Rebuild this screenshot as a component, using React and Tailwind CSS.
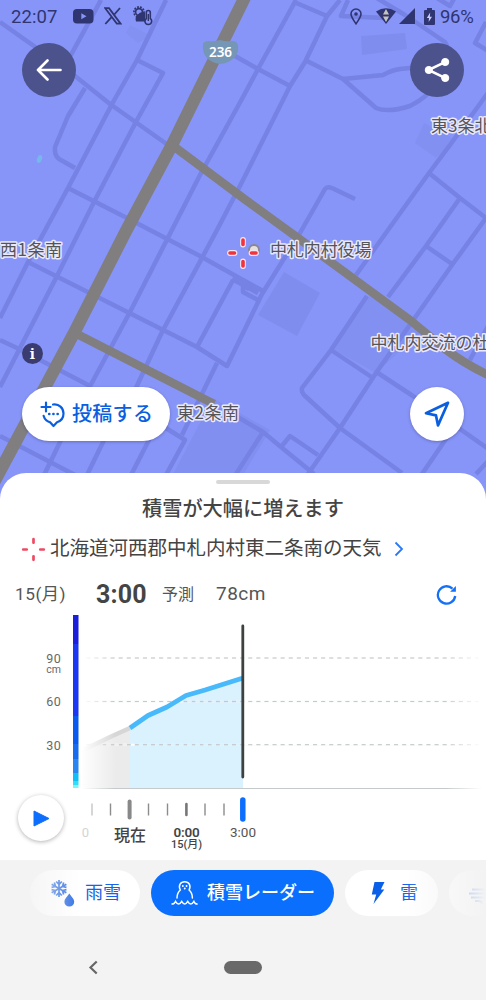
import React from 'react';

const MINOR_ROADS = [
    'M0 22L65 68L110 104L168 145',
    'M101 0L66 64',
    'M166 0L137 60L112 104L68 188L28 262L0 318',
    'M137 60L163 73L137 120L95 200L57 276L0 387',
    'M85 88L68 116L55 147Q54 155 59 159L75 168',
    'M68 188L125 217L200 256L243 280L265 292',
    'M235 56L258 69L290 86',
    'M296 0L258 69L243 97L200 175L130 312L88 390',
    'M294 2L327 16',
    'M340 0L327 16L305 62L290 86L243 180L217 230L162 332L135 390',
    'M348 0L341 16L385 18',
    'M375 -3L405 15L445 42Q450 48 443 62L434 85Q428 97 410 106Q388 113 376 108L343 79L305 60',
    'M343 79L383 75Q392 70 400 69L440 65',
    'M437 -2L450 6L455 -3',
    'M486 22L475 43L490 52',
    'M490 90L450 145L429 173L388 230L356 275',
    'M367 296L331 350L302 388Q301 391 304 395L340 428L402 473',
    'M429 173L460 198L486 218L452 265L376 373L340 428L308 474',
    'M460 198L426 246L388 297',
    'M426 246L452 264',
    'M331 350L373 378',
    'M378 373L413 396L490 450',
    'M448 436L422 474',
    'M488 326L470 360',
    'M490 459L476 474',
    'M355 199L332 188Q327 186 325 189L300 233L262 294L227 366L197 347L28 262',
    'M233 280L197 347',
    'M232 279L258 293M243 286L243 292L258 300M250 283L246 290',
    'M217 363L182 435',
    'M0 340L17 348L90 386',
    'M0 436L75 475',
    'M62 438L44 475',
    'M105 438L87 475',
    'M150 438L131 475',
    'M158 423L185 440L166 475',
    'M236 416L263 432L281 447L314 474',
    'M281 447L290 436L318 455',
    'M263 432L236 474',
];

const SCALE = [
    { y: 5, h: 29, c: '#1b1fdc' },
    { y: 34, h: 72, c: '#1c37f3' },
    { y: 106, h: 28, c: '#0a5af0' },
    { y: 134, h: 15, c: '#176bee' },
    { y: 149, h: 14, c: '#2985f2' },
    { y: 163, h: 8, c: '#10bef8' },
    { y: 171, h: 4, c: '#31def8' },
    { y: 175, h: 3, c: '#7df4fc' },
];

const TICKS = [92, 110.5, 148.5, 167.5, 205, 224];

const font = "font-[Roboto,'Noto_Sans_CJK_JP',sans-serif]";

const Crosshair = ({ halo, className }) => (
    <svg viewBox="0 0 34 34" className={className} fill="none" strokeLinecap="round">
        {halo && <path d="M17 4v4.500M17 25.500v4.500M4 17h4.500M25.500 17h4.500" stroke="#f3e6f4" strokeWidth="5.800" />}
        <path d="M17 4v4.500M17 25.500v4.500M4 17h4.500M25.500 17h4.500" stroke={halo ? '#f0333c' : '#ee4a62'} strokeWidth={halo ? 3.6 : 3.4} />
    </svg>
);

const MapLabel = ({ x, y, size = 17, children, ...rest }) => (
    <text x={x} y={y} fontSize={size} fill="#555457" stroke="#e9e8fc" strokeWidth="3" strokeLinejoin="round" paintOrder="stroke" {...rest}>{children}</text>
);

const MapView = () => (
    <svg viewBox="0 0 486 500" className="block w-[486px] h-[500px] bg-[#8795f8]">
        <g fill="#7f8eee">
            <path d="M361 36L405 33L407 49L362 55Z" />
            <path d="M284 272L320 293L297 336L258 315Z" />
            <path d="M370 296L400 311L422 331L376 373L333 349Z" opacity="0.7" />
            <path d="M424 123L456 140L436 158L415 143Z" opacity="0.6" />
            <path d="M213 398L270 430L240 480L170 480Z" opacity="0.8" />
            <path d="M130 25L150 35L138 43L126 33Z" opacity="0.5" />
        </g>
        <ellipse cx="39.500" cy="159" rx="2.400" ry="4" transform="rotate(20 39.500 159)" fill="#76b8ec" />
        <g fill="none" stroke="#7682e4" strokeWidth="4.5" strokeLinejoin="round">
            {MINOR_ROADS.map((d, i) => <path key={i} d={d} />)}
        </g>
        <g fill="none" stroke="#807e7f">
            <path d="M172 145L243 198L298 238L410 320L445 349Q465 364 490 376" strokeWidth="8.500" />
            <path d="M75 333L214 404" strokeWidth="8.500" />
            <path d="M246 -5L172 145L126 231L74 333L-8 486" strokeWidth="12.500" />
        </g>
        <path d="M203 44Q204 41 209 41Q214 42 220 40Q227 42 232 41Q237 41 238 45Q239 52 235 57Q228 64 220 64Q212 63 207 58Q202 53 203 44Z" fill="#7696b6" />
        <text x="220.5" y="57" textAnchor="middle" fontSize="13.500" fontWeight="600" fill="#fff" fontFamily="Noto Sans">236</text>
        <circle cx="254" cy="250" r="5" fill="#e6e1dd" stroke="#8a8792" strokeWidth="2" />
        <g fontFamily="'Noto Sans CJK JP', sans-serif">
            <MapLabel x={431} y={132}>東3条北</MapLabel>
            <MapLabel x={0} y={256} letterSpacing="0.500">西1条南</MapLabel>
            <MapLabel x={270} y={255.5} letterSpacing="-0.100">中札内村役場</MapLabel>
            <MapLabel x={370.5} y={348.5}>中札内交流の杜</MapLabel>
            <MapLabel x={177} y={418.5} letterSpacing="0.500">東2条南</MapLabel>
        </g>
    </svg>
);

const StatusBar = () => (
    <div className="absolute inset-x-0 top-0 h-8 flex items-center justify-between pl-[11px] pr-[10px] text-[#2f3570]">
        <div className="flex items-center">
            <span className="text-[18.500px] leading-8 tracking-[0.1px] w-[62px] pt-[2px]">22:07</span>
            <svg viewBox="0 0 21 16" className="w-[21px] h-[16px]">
                <rect x="0" y="1" width="20.5" height="14.5" rx="4" fill="currentColor" />
                <path d="M8.3 5.2v6l5.2-3z" fill="#8795f8" />
            </svg>
            <svg viewBox="0 0 18 18" className="w-[18px] h-[18px] ml-[10px]" fill="none" stroke="currentColor">
                <path d="M1.2 1.2h3.8l11.6 15.4h-3.8z" strokeWidth="1.8" />
                <path d="M16 1L10.3 7.5M7.6 10.2L1.3 17" strokeWidth="1.8" />
            </svg>
            <svg viewBox="0 0 20 20" className="w-[20px] h-[20px] ml-[11px]">
                <circle cx="6" cy="6" r="5" fill="none" stroke="currentColor" strokeWidth="1.8" strokeDasharray="1.8 1.2" />
                <circle cx="6" cy="6" r="3.4" fill="none" stroke="currentColor" strokeWidth="1.6" />
                <path d="M3 15.500q-1.500-5 2-7q2.500-3.500 7-1.500v8.500z" fill="currentColor" />
                <path d="M13.3 6.5q0-2 2-2t2 2v6q1.6 1 1.4 3q-.4 3-3.4 3t-3.4-3q0-2 1.4-3z" fill="#8795f8" stroke="currentColor" strokeWidth="1.600" />
                <path d="M15.3 8v7" stroke="currentColor" strokeWidth="1.4" />
            </svg>
        </div>
        <div className="flex items-center">
            <svg viewBox="0 0 12 17" className="w-[12px] h-[17px] mr-[14px]" fill="none" stroke="currentColor">
                <path d="M6 15.8C3 11.5 1 8.8 1 6a5 5 0 0 1 10 0c0 2.800-2 5.500-5 9.800z" strokeWidth="1.6" />
                <circle cx="6" cy="6" r="1.8" fill="currentColor" stroke="none" />
            </svg>
            <svg viewBox="0 0 20 16" className="w-[20px] h-[16px]">
                <path d="M0 3.500Q10-3 20 3.500L10 16z" fill="currentColor" />
                <path d="M10 1l3 5.500h-6zM10 14l3-5.500h-6z" fill="#c5c3bd" />
            </svg>
            <svg viewBox="0 0 16 16" className="w-[16px] h-[16px] ml-[3px]"><path d="M16 0v16H0z" fill="currentColor" /></svg>
            <svg viewBox="0 0 11 17" className="w-[11px] h-[17px] ml-[9px]">
                <path d="M3 0h5v2h2q1 0 1 1v13q0 1-1 1H1q-1 0-1-1V3q0-1 1-1h2z" fill="currentColor" />
                <path d="M6.200 4.500L2.800 10h2.200l-.4 4L8 8.700H5.800z" fill="#c9cdf8" />
            </svg>
            <span className="text-[18.500px] leading-8 ml-[5px] w-[36px] pt-[2px] whitespace-nowrap tracking-[-0.3px]">96%</span>
        </div>
    </div>
);

const MapControls = () => (
    <>
        <div className="absolute left-[22px] top-[43px] w-[54px] h-[54px] rounded-full bg-[#4c528b] flex items-center justify-center">
            <svg viewBox="0 0 26 22" className="w-[26px] h-[22px]" fill="none" stroke="#fff" strokeWidth="2.600" strokeLinecap="round" strokeLinejoin="round">
                <path d="M24.500 11H2M11.500 1.500L2 11l9.500 9.500" />
            </svg>
        </div>
        <div className="absolute right-[22px] top-[43px] w-[54px] h-[54px] rounded-full bg-[#4c528b] flex items-center justify-center">
            <svg viewBox="0 0 26 26" className="w-[26px] h-[26px]" fill="#fff" stroke="#fff">
                <path d="M21.500 4.800L4.500 13l17 8.200" fill="none" strokeWidth="2.600" />
                <circle cx="21.200" cy="5" r="3.600" />
                <circle cx="4.800" cy="13" r="3.600" />
                <circle cx="21.200" cy="21" r="3.600" />
            </svg>
        </div>
        <Crosshair halo className="absolute left-[226px] top-[236px] w-[34px] h-[34px]" />
        <div className="absolute left-[22px] top-[343px] w-[21px] h-[21px] rounded-full bg-[#3a3c70] text-white text-center text-[15px] leading-[21px] font-bold font-['Noto_Serif','DejaVu_Serif',serif]">i</div>
        <div className="absolute left-[22px] top-[387px] w-[148px] h-[54px] rounded-full bg-white shadow-[0_1px_3px_rgba(40,40,90,0.35)] flex items-center pl-[18px]">
            <svg viewBox="0 0 26 27" className="w-[26px] h-[27px]" fill="none" stroke="#0a5fe0" strokeWidth="2.200" strokeLinecap="round" strokeLinejoin="round">
                <path d="M6 1.500v9M1.500 6h9" />
                <path d="M13 3.500C19 2.500 23.500 7 23.500 12.500c0 4.500-2.500 7.500-6.500 8.800L13.500 25l-3.200-3.600C7 20.500 4.500 18 3.600 14.800" />
                <path d="M9.200 13h.1M13.400 13h.1M17.600 13h.1" strokeWidth="2.600" />
            </svg>
            <span className="ml-[6px] text-[20px] leading-[28px] tracking-[0.3px] font-medium text-[#0a5fe0] whitespace-nowrap">投稿する</span>
        </div>
        <div className="absolute right-[22px] top-[387px] w-[54px] h-[54px] rounded-full bg-white shadow-[0_1px_3px_rgba(40,40,90,0.35)] flex items-center justify-center">
            <svg viewBox="0 0 26 26" className="w-[26px] h-[26px]" fill="none" stroke="#0a5fe0" strokeWidth="2.700" strokeLinejoin="round">
                <path d="M24 1.800L2 12.200l10 2.200l2 10z" />
            </svg>
        </div>
    </>
);

const SnowChart = () => (
    <svg viewBox="0 0 486 180" className="block w-[486px] h-[180px]">
        <defs>
            <linearGradient id="past" gradientUnits="userSpaceOnUse" x1="80" x2="116" y1="0" y2="0">
                <stop offset="0" stopColor="#fff" />
                <stop offset="1" stopColor="#ebebeb" />
            </linearGradient>
            <linearGradient id="pastLine" gradientUnits="userSpaceOnUse" x1="82" x2="116" y1="0" y2="0">
                <stop offset="0" stopColor="#fff" />
                <stop offset="1" stopColor="#d6d6d6" />
            </linearGradient>
            <linearGradient id="grid" gradientUnits="userSpaceOnUse" x1="82" x2="486" y1="0" y2="0">
                <stop offset="0" stopColor="#c4cacb" stopOpacity="0" />
                <stop offset="0.08" stopColor="#c4cacb" />
                <stop offset="0.9" stopColor="#c4cacb" />
                <stop offset="0.99" stopColor="#c4cacb" stopOpacity="0" />
            </linearGradient>
        </defs>
        <path d="M82 141L110 127.500L130 118V178H82z" fill="url(#past)" />
        <path d="M130 118L148 106L167 97L186 86L243 68V178H130z" fill="#daf1fe" />
        {[48, 91.500, 134.700].map(y => (
            <rect key={y} x="86" y={y - 0.6} width="394" height="1.200" fill="url(#grid)" />
        ))}
        {/* gaps that turn each grid line into dashes */}
        {[48, 91.500, 134.700].map(y => (
            <g key={y} strokeWidth="2" strokeDasharray="4 4.100">
                <path d={`M90.300 ${y}H480`} stroke="#fff" />
                {y > 100 && <path d={`M90.300 ${y}H130`} stroke="#f0f0f0" />}
            </g>
        ))}
        <path d="M138.900 134.700H243" stroke="#daf1fe" strokeWidth="2" strokeDasharray="4 4.100" />
        <path d="M187.500 91.500H243" stroke="#daf1fe" strokeWidth="2" strokeDasharray="4 4.100" />
        <path d="M82 140.500L110 127L130 118" fill="none" stroke="url(#pastLine)" strokeWidth="4.500" />
        <path d="M130 118L148 105.500L167 97L186 85.500L205 80L243 68" fill="none" stroke="#48b9fb" strokeWidth="4.800" strokeLinejoin="round" />
        <rect x="82" y="178" width="402" height="1" fill="url(#grid)" />
        {SCALE.map(s => <rect key={s.y} x="73" y={s.y} width="5.500" height={s.h} fill={s.c} />)}
        <path d="M242.800 16V167" stroke="#3d4142" strokeWidth="2.800" strokeLinecap="round" />
        <g fontSize="12.500" fill="#686868" textAnchor="end" letterSpacing="0.300">
            <text x="61" y="52.800">90</text>
            <text x="61" y="62.500" fontSize="10.500" letterSpacing="0">cm</text>
            <text x="61" y="96.300">60</text>
            <text x="61" y="139.500">30</text>
        </g>
    </svg>
);

const Timeline = () => (
    <div className="flex h-[69px] pl-[18px] pt-[5px]">
        <div className="w-[46px] h-[46px] rounded-full bg-white shadow-[0_1px_4px_rgba(0,0,0,0.3)] flex items-center justify-center shrink-0">
            <svg viewBox="0 0 17 17" className="w-[17px] h-[17px] ml-[1px]"><path d="M1 1v15L16 8.500z" fill="#0d6efd" stroke="#0d6efd" strokeLinejoin="round" /></svg>
        </div>
        <svg viewBox="64 795 422 64" className="w-[422px] h-[64px]">
            <g strokeWidth="1.400" stroke="#8c8c8c">
                {TICKS.map(x => <path key={x} d={`M${x} 803.500V815.500`} opacity={x < 100 ? 0.5 : 1} />)}
            </g>
            <path d="M129.600 801.500V817.500" stroke="#888" strokeWidth="4" strokeLinecap="round" />
            <path d="M186.400 804V815" stroke="#777" strokeWidth="2.600" strokeLinecap="round" />
            <path d="M242.800 800V819" stroke="#0d6efd" strokeWidth="5.500" strokeLinecap="round" />
            <g textAnchor="middle" fill="#444">
                <text x="85.500" y="837" fontSize="13" fill="#d4d4d4">0</text>
                <text x="130" y="841" fontSize="16" fontWeight="500">現在</text>
                <text x="186.500" y="837" fontSize="13.500" fontWeight="600" letterSpacing="-0.2">0:00</text>
                <text x="186.500" y="847.500" fontSize="11" fontWeight="500">15(月)</text>
                <text x="243" y="837" fontSize="13.500" fill="#555">3:00</text>
            </g>
        </svg>
    </div>
);

const Sheet = () => (
    <div className="relative -mt-[27px] h-[387px] bg-white rounded-t-[26px] text-[#444]">
        <div className="flex justify-center pt-[7px]"><div className="w-[54px] h-1 rounded-full bg-[#d8d8d8]" /></div>
        <div className="mt-[10px] h-[30px] leading-[30px] text-center text-[20.200px] font-medium">積雪が大幅に増えます</div>
        <div className="mt-[9px] h-[32px] flex items-center pl-[20px]">
            <Crosshair className="w-[27px] h-[27px]" />
            <span className="ml-[3px] text-[19.500px] leading-[32px] whitespace-nowrap">北海道河西郡中札内村東二条南の天気</span>
            <svg viewBox="0 0 10 16" className="w-[10px] h-[16px] ml-[12px]" fill="none" stroke="#2b78f5" strokeWidth="1.800"><path d="M1.500 1.500L8 8l-6.500 6.500" /></svg>
        </div>
        <div className="mt-[12px] h-[33px] pt-[2px] flex items-center">
            <span className="w-[96px] shrink-0 pl-[15px] text-[17.300px] tracking-[0.500px] text-[#555] whitespace-nowrap">15(月)</span>
            <span className="w-[66px] shrink-0 text-[25px] font-bold tracking-[0.2px]">3:00</span>
            <span className="w-[54px] shrink-0 text-[16px] text-[#555]">予測</span>
            <span className="w-[220px] shrink-0 text-[19px] tracking-[0.5px] text-[#555]">78cm</span>
            <svg viewBox="0 0 22 22" className="w-[22px] h-[22px] shrink-0" fill="none" stroke="#1470f5" strokeWidth="2.300">
                <path d="M19.200 12A8.700 8.700 0 1 1 16.500 4.600" />
                <path d="M19.900 2v5.800h-5.800z" fill="#1470f5" stroke="none" />
            </svg>
        </div>
        <SnowChart />
        <Timeline />
    </div>
);

const SnowRainIcon = () => (
    <svg viewBox="0 0 26 28" className="w-[26px] h-[28px]" fill="none" stroke="#2f6fe4" strokeWidth="1.700">
        {[0, 60, 120].map(a => (
            <path key={a} transform={`rotate(${a} 9 9.500)`} d="M9 1v17M6.200 2.500l2.800 3l2.800-3M6.200 16.500l2.800-3l2.800 3" />
        ))}
        <path d="M19.300 14.500c2.500 3.500 4.900 5.500 4.900 8.200a4.900 4.900 0 0 1-9.800 0c0-2.700 2.400-4.700 4.900-8.200z" fill="#2f6fe4" stroke="none" />
    </svg>
);

const SnowmanIcon = () => (
    <svg viewBox="0 0 27 26" className="w-[27px] h-[26px]" fill="none" stroke="#fff" strokeWidth="1.500" strokeLinecap="round">
        <path d="M6 18c0-3.500 1-6 3.300-8C7 5.500 9.500 1.800 13.700 1.800S20.400 5.500 18.100 10c2.300 2 3.300 4.500 3.300 8" />
        <path d="M11.800 6h.1M15.500 6h.1M13.700 8.500h.1" strokeWidth="1.800" />
        <path d="M1 24q2.500 0 3.500-2.600q1.500 2.600 3.100 2.600t3.100-2.600q1.500 2.600 3 2.600t3-2.600q1.500 2.600 3.100 2.600t3.100-2.600q1 2.600 3.200 2.600" />
    </svg>
);

const LayerTabs = () => (
    <div className="relative h-[56px] pt-[10px] overflow-hidden text-[18px] text-[#1762e6]">
        <div className="flex gap-[11px] -ml-[82px] w-[700px] h-[46px]">
            <div className="w-[101px] rounded-full bg-white" />
            <div className="w-[110px] rounded-full bg-white flex items-center pl-[20px]">
                <SnowRainIcon />
                <span className="ml-[9px] leading-none">雨雪</span>
            </div>
            <div className="w-[183px] rounded-full bg-[#0b6ffe] text-white flex items-center pl-[20px]">
                <SnowmanIcon />
                <span className="ml-[9px] leading-none font-medium whitespace-nowrap">積雪レーダー</span>
            </div>
            <div className="w-[93px] rounded-full bg-white flex items-center pl-[26px]">
                <svg viewBox="0 0 14 24" className="w-[14px] h-[24px]"><path d="M3.500 1h10L9.800 8.500h3.500L2.500 23L5.200 13.500H.8z" fill="#0a5fe8" /></svg>
                <span className="ml-[15px] leading-none">雷</span>
            </div>
            <div className="w-[110px] rounded-full bg-white flex items-center pl-[19px]">
                <svg viewBox="0 0 26 20" className="w-[26px] h-[20px] mt-1" fill="none" stroke="#1762e6" strokeWidth="2">
                    <path d="M4 4.500h17q3 0 3-3M1 8.500h20M3 12.500h16M7 16h4q3 0 3 2.500" />
                </svg>
            </div>
        </div>
        <div className="absolute left-0 top-0 h-full w-[80px] bg-linear-to-r from-[#f3f3f3] from-20% to-[#f3f3f3]/0" />
        <div className="absolute right-0 top-0 h-full w-[80px] bg-linear-to-l from-[#f3f3f3] from-0% via-[#f3f3f3]/75 via-30% to-[#f3f3f3]/0" />
    </div>
);

export default function App() {
    return (
        <div className={`w-[486px] h-[1000px] overflow-hidden bg-[#f3f3f3] ${font}`}>
            <div className="relative">
                <MapView />
                <StatusBar />
                <MapControls />
            </div>
            <Sheet />
            <LayerTabs />
            <div className="h-[103px] flex items-center pl-[88px]">
                <svg viewBox="0 0 10 15" className="w-[10px] h-[15px]" fill="none" stroke="#666" strokeWidth="2.200"><path d="M8.700 1.500L2.500 7.500l6.200 6" /></svg>
                <div className="ml-[126px] w-[38px] h-[13px] rounded-full bg-[#696969]" />
            </div>
        </div>
    );
}
